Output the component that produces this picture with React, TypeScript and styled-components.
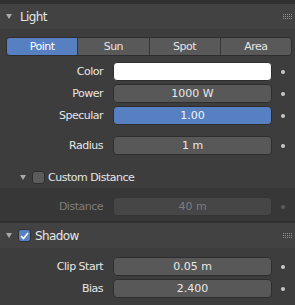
import styled, { createGlobalStyle } from "styled-components";

const Global = createGlobalStyle`
  body {
    margin: 0;
    background: #303030;
    font-family: "DejaVu Sans", "Liberation Sans", sans-serif;
  }
`;

const Editor = styled.div`
  width: 295px;
  height: 305px;
  overflow: hidden;
  box-sizing: border-box;
  padding-top: 4px;
  background: #303030;
  display: flex;
  flex-direction: column;
  gap: 2px;
`;

const Panel = styled.section<{ $grow?: boolean }>`
  display: flex;
  flex-direction: column;
  flex: ${(p) => (p.$grow ? 1 : "none")};
`;

const PanelHeader = styled.div`
  height: 25px;
  background: #424242;
  display: flex;
  align-items: center;
  padding: 0 2px 0 6px;
  color: #e6e6e6;
  font-size: 12px;
  letter-spacing: -0.6px;
`;

const SubHeader = styled.div`
  height: 22px;
  display: flex;
  align-items: center;
  padding-left: 20px;
  color: #e6e6e6;
  font-size: 11px;
  letter-spacing: -0.5px;
`;

const Arrow = styled.svg<{ $gap: number }>`
  width: 6px;
  height: 5px;
  margin-right: ${(p) => p.$gap}px;
  fill: #a9a9a9;
  flex: none;
`;

const Grip = styled.svg`
  width: 10px;
  height: 5px;
  margin-left: auto;
  fill: #929292;
  shape-rendering: crispEdges;
`;

const Check = styled.div<{ $on?: boolean; $gap: number }>`
  width: 13px;
  height: 13px;
  box-sizing: border-box;
  border-radius: 3px;
  border: 1px solid #2f2f2f;
  background: ${(p) => (p.$on ? "#5680c2" : "#5b5b5b")};
  margin-right: ${(p) => p.$gap}px;
  display: flex;
  align-items: center;
  justify-content: center;
  flex: none;
`;

const PanelBody = styled.div<{ $dark?: boolean; $pad: string }>`
  background: ${(p) => (p.$dark ? "#373737" : "#3d3d3d")};
  padding: ${(p) => p.$pad};
  display: flex;
  flex-direction: column;
  flex: 1;
`;

const Enum = styled.div`
  display: flex;
  height: 19px;
  margin: 0 3px 0 6px;
  box-sizing: border-box;
  border: 1px solid #2d2d2d;
  border-radius: 4px;
  overflow: hidden;
`;

const EnumItem = styled.div<{ $on?: boolean }>`
  flex: 1;
  display: flex;
  align-items: center;
  justify-content: center;
  background: ${(p) => (p.$on ? "#5680c2" : "#595959")};
  border-left: 1px solid #363636;
  color: ${(p) => (p.$on ? "#ffffff" : "#e6e6e6")};
  font-size: 11px;
  letter-spacing: -0.5px;
  &:first-child {
    border-left: none;
  }
`;

const Row = styled.div<{ $top: number }>`
  display: flex;
  align-items: center;
  height: 19px;
  margin-top: ${(p) => p.$top}px;
`;

const Label = styled.div<{ $off?: boolean }>`
  width: 113px;
  box-sizing: border-box;
  padding-right: 10px;
  text-align: right;
  font-size: 11px;
  letter-spacing: -0.5px;
  color: ${(p) => (p.$off ? "#7e7e7e" : "#e6e6e6")};
`;

type Tone = "num" | "blue" | "white" | "off";

const fills: Record<Tone, string> = {
  num: "#585858",
  blue: "#5680c2",
  white: "#ffffff",
  off: "#464646",
};

const Field = styled.div<{ $tone: Tone }>`
  width: 159px;
  height: 19px;
  box-sizing: border-box;
  border: 1px solid ${(p) => (p.$tone === "off" ? "#353535" : "#2e2e2e")};
  border-radius: 4px;
  background: ${(p) => fills[p.$tone]};
  color: ${(p) => (p.$tone === "off" ? "#7c7c7c" : p.$tone === "blue" ? "#f4f4f4" : "#e8e8e8")};
  font-size: 11px;
  display: flex;
  align-items: center;
  justify-content: center;
`;

const Dot = styled.span<{ $off?: boolean }>`
  width: 4px;
  height: 4px;
  border-radius: 50%;
  margin-left: 9px;
  background: ${(p) => (p.$off ? "#5c5c5c" : "#c9c9c9")};
`;

const DownArrow = ({ gap }: { gap: number }) => (
  <Arrow $gap={gap} viewBox="0 0 6 5">
    <polygon points="0,0 6,0 3,5" />
  </Arrow>
);

// drag handle: 5 columns x 3 rows of single pixels
const GripDots = () => (
  <Grip viewBox="0 0 10 5">
    {[0, 2, 4].map((y) =>
      [0, 2, 4, 6, 8].map((x) => <rect key={`${x}-${y}`} x={x} y={y} width="1" height="1" />)
    )}
  </Grip>
);

const Tick = () => (
  <svg width="9" height="8" viewBox="0 0 9 8">
    <polyline points="1,4 3.5,6.5 8,1" fill="none" stroke="#fff" strokeWidth="1.6" />
  </svg>
);

type Prop = { label: string; value: string; tone: Tone; top: number; off?: boolean };

const PropRow = ({ label, value, tone, top, off }: Prop) => (
  <Row $top={top}>
    <Label $off={off}>{label}</Label>
    <Field $tone={tone}>{value}</Field>
    <Dot $off={off} />
  </Row>
);

export default function App() {
  return (
    <Editor>
      <Global />
      <Panel>
        <PanelHeader>
          <DownArrow gap={8} />
          Light
          <GripDots />
        </PanelHeader>
        <PanelBody $pad="8px 0 11px 0">
          <Enum>
            {["Point", "Sun", "Spot", "Area"].map((t) => (
              <EnumItem key={t} $on={t === "Point"}>
                {t}
              </EnumItem>
            ))}
          </Enum>
          <PropRow label="Color" value="" tone="white" top={6} />
          <PropRow label="Power" value="1000 W" tone="num" top={3} />
          <PropRow label="Specular" value="1.00" tone="blue" top={3} />
          <PropRow label="Radius" value="1 m" tone="num" top={11} />
        </PanelBody>
        <PanelBody $pad="0">
          <SubHeader>
            <DownArrow gap={6} />
            <Check $gap={3} />
            Custom Distance
          </SubHeader>
        </PanelBody>
        <PanelBody $dark $pad="0 0 5px 0">
          <PropRow label="Distance" value="40 m" tone="off" top={9} off />
        </PanelBody>
      </Panel>
      <Panel $grow>
        <PanelHeader>
          <DownArrow gap={6} />
          <Check $on $gap={4}>
            <Tick />
          </Check>
          Shadow
          <GripDots />
        </PanelHeader>
        <PanelBody $pad="0">
          <PropRow label="Clip Start" value="0.05 m" tone="num" top={9} />
          <PropRow label="Bias" value="2.400" tone="num" top={3} />
        </PanelBody>
      </Panel>
    </Editor>
  );
}
